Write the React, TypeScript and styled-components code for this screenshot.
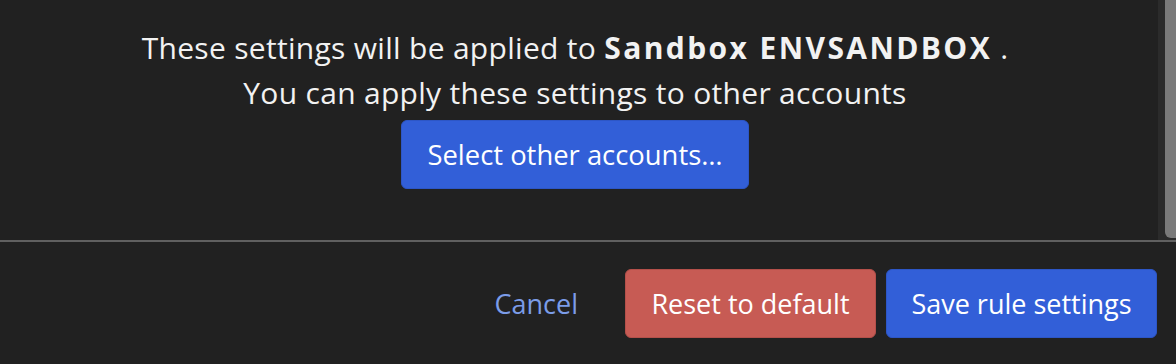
import React from "react";
import styled, { createGlobalStyle } from "styled-components";

const GlobalStyle = createGlobalStyle`
  html, body {
    margin: 0;
    padding: 0;
    background: #212121;
  }
  body {
    font-family: "Open Sans", "Noto Sans", sans-serif;
  }
`;

const Page = styled.div`
  width: 1176px;
  height: 364px;
  background: #212121;
  display: flex;
  flex-direction: column;
  overflow: hidden;
`;

const Body = styled.div`
  height: 240px;
  display: flex;
`;

const Content = styled.div`
  flex: 1;
  display: flex;
  flex-direction: column;
  align-items: center;
  padding: 25px 8px 0 0;
  color: #f2f2f2;
  font-size: 30px;
  line-height: 45px;
  letter-spacing: 0.3px;
  text-align: center;
`;

const Line = styled.div`
  white-space: nowrap;
`;

const Strong = styled.strong`
  font-weight: 700;
  letter-spacing: 2.4px;
`;

const ScrollTrack = styled.div`
  width: 18px;
  background: #2b2b2b;
  display: flex;
  justify-content: flex-end;
`;

const ScrollThumb = styled.div`
  width: 11px;
  height: 238px;
  background: #7a7a7a;
  border-radius: 0 0 0 6px;
`;

const Divider = styled.div`
  height: 2px;
  background: #606060;
`;

const Footer = styled.div`
  flex: 1;
  display: flex;
  justify-content: flex-end;
  align-items: center;
  gap: 10px;
  padding: 0 19px 0 0;
`;

const Button = styled.button<{ $variant: "primary" | "danger" | "link" }>`
  height: 69px;
  padding: 0 12px;
  border-radius: 6px;
  font-family: "Open Sans", "Noto Sans", sans-serif;
  font-size: 27px;
  white-space: nowrap;
  cursor: pointer;
  color: ${(p) => (p.$variant === "link" ? "#7b9ce8" : "#ffffff")};
  background: ${(p) =>
    p.$variant === "primary"
      ? "#325fd8"
      : p.$variant === "danger"
      ? "#c75b54"
      : "transparent"};
  border: 1px solid
    ${(p) =>
      p.$variant === "primary"
        ? "#2d56c6"
        : p.$variant === "danger"
        ? "#b4504a"
        : "transparent"};
`;

const SelectButton = styled(Button)`
  margin-top: 5px;
  width: 348px;
  font-size: 27.4px;
`;

const CancelButton = styled(Button)`
  margin-right: 26px;
  padding: 0 10px;
`;

export default function App() {
  return (
    <Page>
      <GlobalStyle />
      <Body>
        <Content>
          <Line>
            These settings will be applied to <Strong>Sandbox ENVSANDBOX</Strong> .
          </Line>
          <Line>You can apply these settings to other accounts</Line>
          <SelectButton $variant="primary">Select other accounts…</SelectButton>
        </Content>
        <ScrollTrack>
          <ScrollThumb />
        </ScrollTrack>
      </Body>
      <Divider />
      <Footer>
        <CancelButton $variant="link">Cancel</CancelButton>
        <Button $variant="danger" style={{ width: 251 }}>
          Reset to default
        </Button>
        <Button $variant="primary" style={{ width: 271 }}>
          Save rule settings
        </Button>
      </Footer>
    </Page>
  );
}
